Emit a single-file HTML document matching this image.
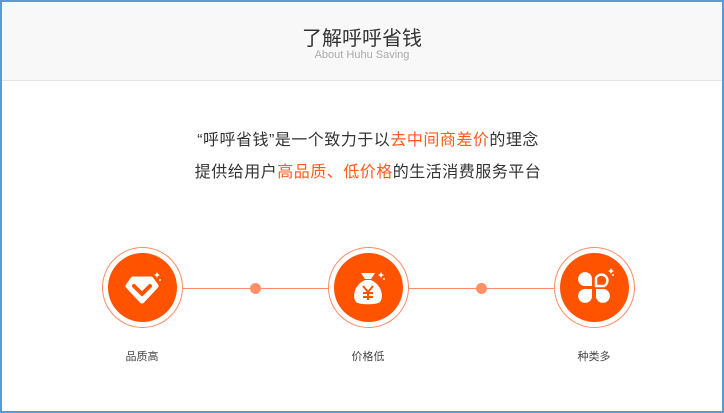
<!DOCTYPE html>
<html><head><meta charset="utf-8"><style>
*{margin:0;padding:0;box-sizing:border-box}
body{width:724px;height:413px;overflow:hidden;background:#fff;font-family:"Liberation Sans","Noto Sans CJK SC",sans-serif;}
.frame{position:absolute;left:0;top:0;width:724px;height:413px;border:2px solid #5b9bd5;}
.hdr{position:absolute;left:2px;top:2px;width:720px;height:79px;background:#f8f8f8;border-bottom:1px solid #e4e4e4;}
.t1{position:absolute;left:0;width:724px;top:22px;text-align:center;font-size:20px;color:#333;}
.t2{position:absolute;left:0;width:724px;top:49px;text-align:center;font-size:11px;color:#aaa;}
.p{position:absolute;left:6px;width:724px;text-align:center;font-size:16px;letter-spacing:0.5px;color:#333;}
.o{color:#ff5a1f}
.line{position:absolute;top:288px;left:182px;width:372px;height:1px;background:#ff8c66}
.dot{position:absolute;top:283px;width:11px;height:11px;border-radius:50%;background:#ff9068}
.c{position:absolute;top:247px;width:81px;height:81px;border-radius:50%;border:1px solid #ff8c66;background:#fff}
.c .in{position:absolute;left:5px;top:5px;width:69px;height:69px;border-radius:50%;background:#ff5300}
.c svg{position:absolute;left:-1px;top:-1px}
.lb{position:absolute;top:348px;font-size:11px;color:#444;width:80px;text-align:center}
</style></head><body>
<div class="hdr"></div>
<div class="t1">了解呼呼省钱</div>
<div class="t2">About Huhu Saving</div>
<div class="p" style="top:126px">“呼呼省钱”是一个致力于以<span class="o">去中间商差价</span>的理念</div>
<div class="p" style="top:158px">提供给用户<span class="o">高品质、低价格</span>的生活消费服务平台</div>
<div class="line"></div>
<div class="dot" style="left:250px"></div>
<div class="dot" style="left:476px"></div>
<div class="c" style="left:102px"><div class="in"></div>
<svg width="81" height="81"><path d="M31 32 L49 32 L54 39 L40 54 L26 39 Z" fill="#fff" stroke="#fff" stroke-width="5" stroke-linejoin="round"/><path d="M32 39 L40 47 L48 39" fill="none" stroke="#ff5300" stroke-width="4" stroke-linecap="round" stroke-linejoin="round"/><path d="M55 25 l1 2 2 1 -2 1 -1 2 -1 -2 -2 -1 2 -1z" fill="#fff"/><circle cx="58" cy="33" r="1" fill="#fff"/></svg></div>
<div class="c" style="left:328px"><div class="in"></div>
<svg width="81" height="81"><path d="M33 26 L47 26 L43 32 L37 32 Z" fill="#fff"/><path d="M37 33 C26 38 24 50 28 55 C31 58 49 58 52 55 C56 50 54 38 43 33 Z" fill="#fff"/><path d="M35 39 L40 45 L45 39 M40 45 V53 M35 46 H45 M35 50 H45" fill="none" stroke="#ff5300" stroke-width="2"/><path d="M53 25 l1 2 2 1 -2 1 -1 2 -1 -2 -2 -1 2 -1z" fill="#fff"/><circle cx="56" cy="32" r="1" fill="#fff"/></svg></div>
<div class="c" style="left:554px"><div class="in"></div>
<svg width="81" height="81"><path d="M38 39 H30 a7 7 0 1 1 8-8 Z" fill="#fff"/><path d="M38 42 V50 a7 7 0 1 1 -8-8 Z" fill="#fff"/><path d="M42 42 H50 a7 7 0 1 1 -8 8 Z" fill="#fff"/><path d="M42 39 V31 a6 6 0 1 1 8 8 Z" fill="none" stroke="#fff" stroke-width="2.5"/><path d="M57 21 l1 2 2 1 -2 1 -1 2 -1 -2 -2 -1 2 -1z" fill="#fff"/><circle cx="59" cy="28" r="1" fill="#fff"/></svg></div>
<div class="lb" style="left:102px">品质高</div>
<div class="lb" style="left:328px">价格低</div>
<div class="lb" style="left:554px">种类多</div>
<div class="frame"></div>
</body></html>
